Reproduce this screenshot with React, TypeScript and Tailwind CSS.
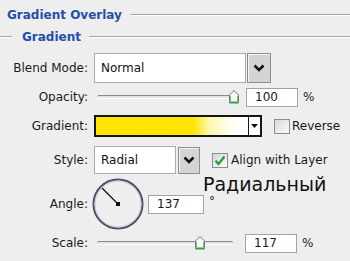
import React from "react";

const font = { fontFamily: '"DejaVu Sans", Verdana, sans-serif' };

function Chevron() {
  return (
    <svg width="12" height="8" viewBox="0 0 12 8">
      <path d="M1.5 1.5 L6 6 L10.5 1.5" fill="none" stroke="#111" strokeWidth="2.6" />
    </svg>
  );
}

function DropButton({ className }: { className: string }) {
  return (
    <div
      className={`flex items-center justify-center border border-[#8d8d8d] bg-[#d4d4d4] shadow-[inset_1px_1px_0_#f4f4f4] ${className}`}
    >
      <Chevron />
    </div>
  );
}

function Thumb() {
  return (
    <svg width="12" height="15" viewBox="0 0 12 15">
      <path d="M1.5 13.5 V6 L6 1.5 L10.5 6 V13.5 Z" fill="#f7f7f7" stroke="#7a7a7a" strokeWidth="1" />
      <path d="M1.5 13.5 H10.5" stroke="#3fa046" strokeWidth="2" />
      <path d="M2.5 12 V7" stroke="#6cbf6a" strokeWidth="1" />
      <path d="M9.5 12 V7" stroke="#6cbf6a" strokeWidth="1" />
    </svg>
  );
}

function Slider({ width, pos }: { width: string; pos: string }) {
  return (
    <div className={`relative flex h-[16px] items-center ${width}`}>
      <div className="h-[4px] w-full rounded-[2px] border-t border-[#8a8a8a] border-b border-b-[#ffffff] bg-[#e4e4e4]" />
      <div className={`absolute top-[0px] ${pos}`}>
        <Thumb />
      </div>
    </div>
  );
}

function NumBox({ value, className }: { value: string; className: string }) {
  return (
    <div
      className={`flex h-[19px] items-center border border-[#a3a3a3] bg-white pl-[8px] text-[12px] text-[#1a1a2a] ${className}`}
    >
      {value}
    </div>
  );
}

function Label({ text }: { text: string }) {
  return <div className="w-[88px] shrink-0 text-right text-[12px] text-[#1a1a1a]">{text}</div>;
}

function Checkbox({ checked }: { checked?: boolean }) {
  return (
    <div className="flex h-[15px] w-[16px] items-center justify-center border border-[#8c8c8c] bg-gradient-to-br from-[#d8d8d8] to-[#fbfbfb]">
      {checked && (
        <svg width="12" height="11" viewBox="0 0 12 11">
          <path d="M1.5 5.5 L4.5 9 L10.5 1.5" fill="none" stroke="#2a9a3a" strokeWidth="2.2" />
        </svg>
      )}
    </div>
  );
}

export default function App() {
  return (
    <div className="relative h-[261px] w-[350px] overflow-hidden bg-[#eeeeee]" style={font}>
      {/* Header */}
      <div className="flex h-[30px] items-center pl-[7px]">
        <span className="text-[12px] font-bold text-[#2450a8]">Gradient Overlay</span>
        <div className="ml-[8px] h-[2px] flex-1 border-t border-[#a4a4a4] border-b border-b-white" />
      </div>
      <div className="flex h-[14px] items-center">
        <div className="h-[2px] w-[12px] border-t border-[#a4a4a4] border-b border-b-white" />
        <span className="ml-[10px] text-[12px] font-bold text-[#2450a8]">Gradient</span>
        <div className="ml-[8px] h-[2px] flex-1 border-t border-[#a4a4a4] border-b border-b-white" />
      </div>

      {/* Blend mode */}
      <div className="flex h-[39px] items-end">
        <div className="flex h-[30px] items-center">
          <Label text="Blend Mode:" />
          <div className="ml-[6px] flex h-[30px] w-[152px] items-center border border-[#a7adb5] bg-white pl-[6px] text-[12px] text-[#111]">
            Normal
          </div>
          <DropButton className="ml-[1px] h-[30px] w-[24px]" />
        </div>
      </div>

      {/* Opacity */}
      <div className="flex h-[28px] items-center">
        <Label text="Opacity:" />
        <div className="ml-[9px]">
          <Slider width="w-[142px]" pos="left-[131px]" />
        </div>
        <NumBox value="100" className="ml-[7px] w-[52px]" />
        <span className="ml-[5px] text-[12px] text-[#222]">%</span>
      </div>

      {/* Gradient */}
      <div className="flex h-[30px] items-center">
        <Label text="Gradient:" />
        <div className="ml-[6px] flex h-[22px] w-[168px] border-2 border-[#151515]">
          <div className="flex-1 bg-[linear-gradient(to_right,#ffe400_0%,#ffe600_64%,#fff6a8_74%,#fffdf0_88%,#ffffff_100%)]" />
          <div className="flex w-[12px] items-center justify-center border-l border-[#151515] bg-white">
            <svg width="7" height="4" viewBox="0 0 7 4">
              <path d="M0 0 H7 L3.5 4 Z" fill="#111" />
            </svg>
          </div>
        </div>
        <div className="ml-[12px]">
          <Checkbox />
        </div>
        <span className="ml-[2px] text-[12px] text-[#1a1a1a]">Reverse</span>
      </div>

      {/* Style */}
      <div className="flex h-[38px] items-center">
        <Label text="Style:" />
        <div className="ml-[6px] flex h-[28px] w-[82px] items-center border border-[#a7adb5] bg-white pl-[6px] text-[12px] text-[#111]">
          Radial
        </div>
        <DropButton className="ml-[2px] h-[27px] w-[22px]" />
        <div className="ml-[12px]">
          <Checkbox checked />
        </div>
        <span className="ml-[3px] text-[12px] text-[#1a1a1a]">Align with Layer</span>
      </div>

      {/* Angle */}
      <div className="flex h-[50px] items-center">
        <Label text="Angle:" />
        <div className="ml-[4px]">
          <svg width="52" height="52" viewBox="0 0 52 52">
            <circle cx="26" cy="26" r="24.5" fill="#efefef" stroke="#4a5168" strokeWidth="2" />
            <circle cx="26" cy="26" r="23" fill="none" stroke="#c9ccd6" strokeWidth="1" />
            <path d="M26 26 L10 10" stroke="#111" strokeWidth="1.3" />
            <rect x="24" y="24" width="4" height="4" fill="#111" />
          </svg>
        </div>
        <NumBox value="137" className="ml-[4px] w-[56px]" />
        <span className="ml-[5px] -mt-[6px] text-[12px] leading-[10px] text-[#222]">°</span>
      </div>

      {/* Scale */}
      <div className="flex h-[28px] items-center">
        <Label text="Scale:" />
        <div className="ml-[9px]">
          <Slider width="w-[136px]" pos="left-[97px]" />
        </div>
        <NumBox value="117" className="ml-[12px] w-[52px]" />
        <span className="ml-[5px] text-[12px] text-[#222]">%</span>
      </div>

      {/* Annotation */}
      <div className="absolute left-[203px] top-[176px] text-[19px] leading-[16px] text-[#111]">Радиальный</div>
    </div>
  );
}
